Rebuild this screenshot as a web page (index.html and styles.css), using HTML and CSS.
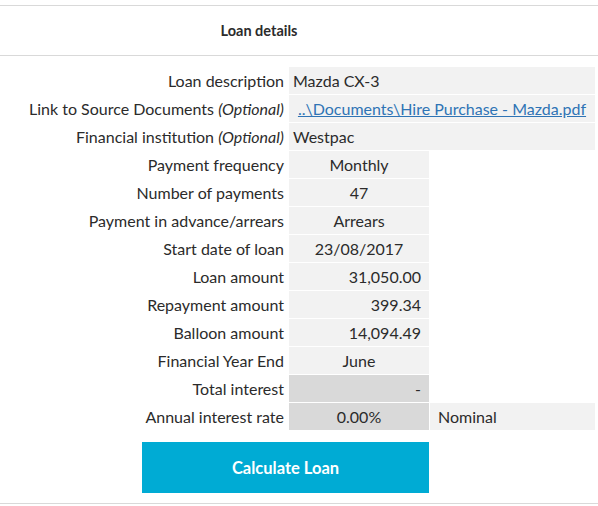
FILE: index.html
```html
<!DOCTYPE html>
<html>
<head>
<meta charset="utf-8">
<link rel="stylesheet" href="styles.css">
</head>
<body>
<div class="page">
  <div class="header">Loan details</div>
  <div class="grid">
    <div class="label"><span>Loan description</span></div>
    <div class="cell wide left">Mazda CX-3</div>

    <div class="label"><span>Link to Source Documents <i>(Optional)</i></span></div>
    <div class="cell wide center"><a class="link" href="#">..\Documents\Hire Purchase - Mazda.pdf</a></div>

    <div class="label"><span>Financial institution <i>(Optional)</i></span></div>
    <div class="cell wide left">Westpac</div>

    <div class="label"><span>Payment frequency</span></div>
    <div class="cell center">Monthly</div>
    <div class="blank"></div>

    <div class="label"><span>Number of payments</span></div>
    <div class="cell center">47</div>
    <div class="blank"></div>

    <div class="label"><span>Payment in advance/arrears</span></div>
    <div class="cell center">Arrears</div>
    <div class="blank"></div>

    <div class="label"><span>Start date of loan</span></div>
    <div class="cell center">23/08/2017</div>
    <div class="blank"></div>

    <div class="label"><span>Loan amount</span></div>
    <div class="cell right">31,050.00</div>
    <div class="blank"></div>

    <div class="label"><span>Repayment amount</span></div>
    <div class="cell right">399.34</div>
    <div class="blank"></div>

    <div class="label"><span>Balloon amount</span></div>
    <div class="cell right">14,094.49</div>
    <div class="blank"></div>

    <div class="label"><span>Financial Year End</span></div>
    <div class="cell center">June</div>
    <div class="blank"></div>

    <div class="label"><span>Total interest</span></div>
    <div class="cell dark right">-</div>
    <div class="blank"></div>

    <div class="label"><span>Annual interest rate</span></div>
    <div class="cell dark center">0.00%</div>
    <div class="cell note">Nominal</div>
  </div>
  <div class="actions">
    <button class="btn">Calculate Loan</button>
  </div>
</div>
</body>
</html>
```
FILE: styles.css
```css
html, body {
  margin: 0;
  padding: 0;
  background: #ffffff;
}
body {
  font-family: Lato, "Open Sans", sans-serif;
  font-size: 16px;
  color: #2b2b2b;
}
.page {
  width: 598px;
  padding-top: 5px;
}
.header {
  border-top: 1px solid #d9d9d9;
  border-bottom: 1px solid #d9d9d9;
  height: 49px;
  display: flex;
  align-items: center;
  justify-content: center;
  padding-right: 80px;
  font-weight: bold;
  font-size: 14.5px;
}
.grid {
  display: grid;
  grid-template-columns: 288px 140px 165px;
  grid-auto-rows: 27px;
  column-gap: 1px;
  row-gap: 1px;
  margin-top: 11px;
}
.label {
  display: flex;
  align-items: center;
  justify-content: flex-end;
  padding-right: 4px;
  white-space: nowrap;
}
.cell {
  background: #f2f2f2;
  display: flex;
  align-items: center;
  white-space: nowrap;
}
.wide {
  grid-column: 2 / 4;
}
.left {
  padding-left: 4px;
}
.center {
  justify-content: center;
}
.right {
  justify-content: flex-end;
  padding-right: 8px;
}
.dark {
  background: #d9d9d9;
}
.note {
  padding-left: 8px;
}
.link {
  color: #2f74b5;
  text-decoration: underline;
}
.actions {
  border-bottom: 1px solid #d9d9d9;
  padding: 12px 0 10px 142px;
}
.btn {
  display: block;
  width: 287px;
  height: 51px;
  border: 0;
  background: #00abd4;
  color: #ffffff;
  font-family: Lato, "Open Sans", sans-serif;
  font-weight: bold;
  font-size: 16.5px;
  padding: 0;
}
```
